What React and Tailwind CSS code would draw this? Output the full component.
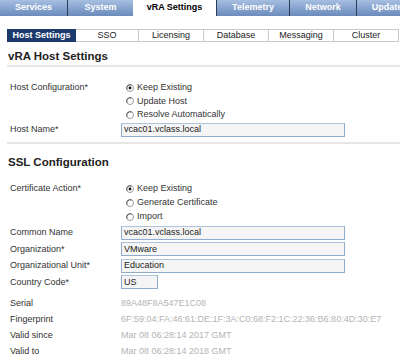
const TOP_TABS = [
  { label: "Services", w: "w-[68px]", border: "border-r" },
  { label: "System", w: "w-[65px]", border: "" },
  { label: "vRA Settings", w: "w-[83px]", active: true },
  { label: "Telemetry", w: "w-[74px]", border: "border-x" },
  { label: "Network", w: "w-[67px]", border: "border-r" },
  { label: "Update", w: "w-[60px]", border: "" },
];

const SUB_TABS = [
  { label: "Host Settings", w: "w-[69px]", active: true },
  { label: "SSO", w: "w-[63px]" },
  { label: "Licensing", w: "w-[65px]" },
  { label: "Database", w: "w-[65px]" },
  { label: "Messaging", w: "w-[65px]" },
  { label: "Cluster", w: "w-[65px]" },
];

function Radio({ checked }) {
  return (
    <svg width="8" height="8" viewBox="0 0 8 8" className="shrink-0">
      <circle cx="4" cy="4" r="3.5" fill="#fff" stroke="#9a9a9a" strokeWidth="1" />
      <path d="M1 5.5 A3.5 3.5 0 0 1 5.5 1" fill="none" stroke="#555" strokeWidth="1" />
      {checked && <circle cx="4" cy="4" r="1.4" fill="#111" />}
    </svg>
  );
}

function RadioGroup({ label, options, rowH }) {
  return (
    <div className="flex">
      <div className={`w-[114px] pl-[3px] flex items-center ${rowH}`}>{label}</div>
      <div className="flex flex-col">
        {options.map((o, i) => (
          <div key={o} className={`flex items-center gap-[3px] pl-[5px] ${rowH}`}>
            <Radio checked={i === 0} />
            <span>{o}</span>
          </div>
        ))}
      </div>
    </div>
  );
}

function InputRow({ label, value, narrow, h = "h-[16.5px]" }) {
  return (
    <div className={`flex items-center ${h}`}>
      <div className="w-[114px] pl-[3px]">{label}</div>
      <div
        className={`h-[14px] ${narrow ? "w-[37px]" : "w-[224px]"} border border-[#8fabcd] border-t-[#aec3dc] bg-[#f5f5f5] flex items-center pl-[2px] text-[#222]`}
      >
        {value}
      </div>
    </div>
  );
}

function InfoRow({ label, value }) {
  return (
    <div className="flex items-center h-[16px]">
      <div className="w-[114px] pl-[3px]">{label}</div>
      <div className="text-[#b3b3b3] whitespace-nowrap">{value}</div>
    </div>
  );
}

export default function App() {
  return (
    <div className="w-[400px] h-[362px] overflow-hidden bg-white font-['Liberation_Sans',Arial,sans-serif] text-[9px] text-[#333]">
      {/* top level tabs */}
      <div className="flex h-[16px] whitespace-nowrap">
        {TOP_TABS.map(t =>
          t.active ? (
            <div key={t.label} className={`${t.w} shrink-0 flex items-center justify-center font-bold text-black bg-white`}>
              {t.label}
            </div>
          ) : (
            <div
              key={t.label}
              className={`${t.w} shrink-0 flex items-center justify-center font-bold text-white bg-gradient-to-b from-[#a6bee1] to-[#6b8bbb] border-[#2c3d5a] ${t.border}`}
            >
              {t.label}
            </div>
          )
        )}
      </div>

      <div className="pl-[7px]">
        {/* sub tabs */}
        <div className="mt-[13px] flex h-[13px] whitespace-nowrap">
          {SUB_TABS.map(t => (
            <div
              key={t.label}
              className={`${t.w} shrink-0 flex items-center justify-center border border-l-0 first:border-l ${
                t.active ? "bg-[#1c3b6c] border-[#1c3b6c] text-white font-bold" : "bg-white border-[#c9c9c9] text-[#222]"
              }`}
            >
              {t.label}
            </div>
          ))}
        </div>

        <div className="mt-[7px] h-[14px] leading-[14px] pl-[1px] text-[11.5px] font-bold text-[#222]">vRA Host Settings</div>
        <div className="mt-[2px] h-[2px] bg-[#e6e6e6]" />

        <div className="mt-[14px]">
          <RadioGroup
            label="Host Configuration*"
            options={["Keep Existing", "Update Host", "Resolve Automatically"]}
            rowH="h-[13.5px]"
          />
        </div>
        <div className="mt-[1px]">
          <InputRow label="Host Name*" value="vcac01.vclass.local" h="h-[15px]" />
        </div>
        <div className="mt-[4px] h-[2px] bg-[#e6e6e6]" />

        <div className="mt-[11px] h-[14px] leading-[14px] pl-[1px] text-[11.5px] font-bold text-[#222]">SSL Configuration</div>

        <div className="mt-[13px]">
          <RadioGroup
            label="Certificate Action*"
            options={["Keep Existing", "Generate Certificate", "Import"]}
            rowH="h-[14px]"
          />
        </div>

        <div className="mt-[1px]">
          <InputRow label="Common Name" value="vcac01.vclass.local" />
          <InputRow label="Organization*" value="VMware" />
          <InputRow label="Organizational Unit*" value="Education" />
          <InputRow label="Country Code*" value="US" narrow />
        </div>

        <div className="mt-[5px]">
          <InfoRow label="Serial" value="89A48F8A547E1C08" />
          <InfoRow label="Fingerprint" value="6F:59:04:FA:46:61:DE:1F:3A:C0:68:F2:1C:22:36:B6:80:4D:30:E7" />
          <InfoRow label="Valid since" value="Mar 08 06:28:14 2017 GMT" />
          <InfoRow label="Valid to" value="Mar 08 06:28:14 2018 GMT" />
        </div>
      </div>
    </div>
  );
}
